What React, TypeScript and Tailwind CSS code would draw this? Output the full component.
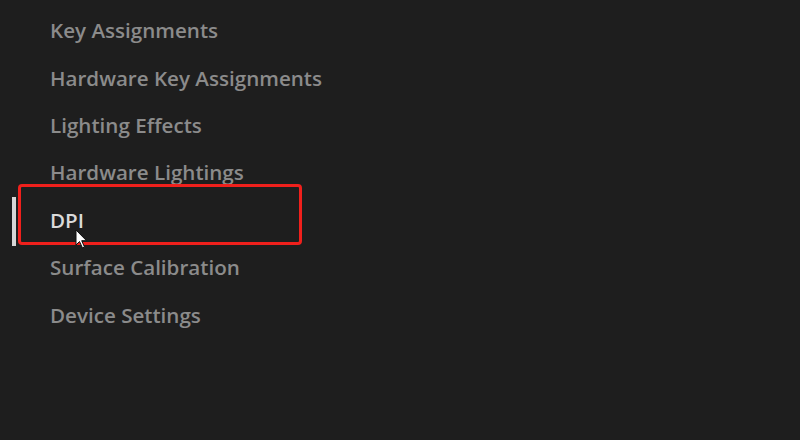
const items = [
  "Key Assignments",
  "Hardware Key Assignments",
  "Lighting Effects",
  "Hardware Lightings",
  "DPI",
  "Surface Calibration",
  "Device Settings",
];

export default function App() {
  return (
    <div className="relative w-[800px] h-[440px] bg-[#1e1e1e] overflow-hidden font-['Open_Sans',sans-serif]">
      <nav className="flex flex-col pt-[7px]">
        {items.map((label) => {
          const active = label === "DPI";
          return (
            <div key={label} className="relative flex items-center h-[47.4px] pl-[50px]">
              {active && (
                <div className="absolute left-[12px] top-[0px] w-[4px] h-[49px] bg-[#d6d6d6]" />
              )}
              <span
                className={
                  active
                    ? "text-[20.6px] font-semibold text-[#dadada]"
                    : "text-[20.6px] font-semibold text-[#8b8b8b]"
                }
              >
                {label}
              </span>
            </div>
          );
        })}
      </nav>

      {/* annotation box */}
      <div className="absolute left-[18px] top-[184px] w-[284px] h-[61px] border-[3px] border-[#f0201c] rounded-[4px]" />

      {/* mouse cursor */}
      <svg className="absolute left-[75px] top-[229px]" width="14" height="20" viewBox="0 0 14 20">
        <path d="M1 1 L1 16 L4.5 12.5 L7.5 19 L9.5 18 L6.7 11.7 L11.5 11.7 Z" fill="#ffffff" stroke="#111" strokeWidth="1" />
      </svg>
    </div>
  );
}
